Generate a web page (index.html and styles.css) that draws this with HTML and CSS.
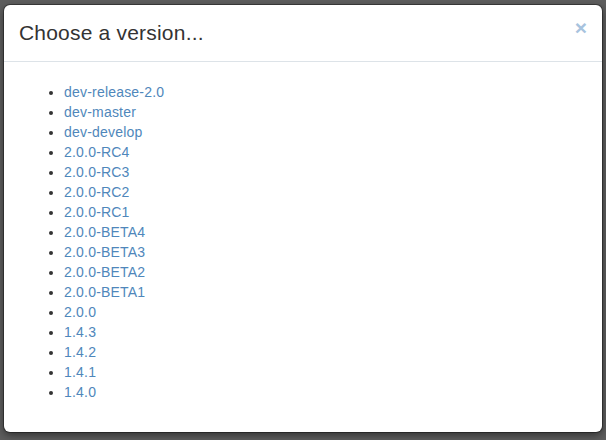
FILE: index.html
```html
<!DOCTYPE html>
<html>
<head>
<meta charset="utf-8">
<link rel="stylesheet" href="styles.css">
</head>
<body>
<div class="modal">
  <div class="modal-header">
    <h4 class="modal-title">Choose a version...</h4>
    <button class="close" type="button">×</button>
  </div>
  <div class="modal-body">
    <ul class="versions">
      <li><a href="#">dev-release-2.0</a></li>
      <li><a href="#">dev-master</a></li>
      <li><a href="#">dev-develop</a></li>
      <li><a href="#">2.0.0-RC4</a></li>
      <li><a href="#">2.0.0-RC3</a></li>
      <li><a href="#">2.0.0-RC2</a></li>
      <li><a href="#">2.0.0-RC1</a></li>
      <li><a href="#">2.0.0-BETA4</a></li>
      <li><a href="#">2.0.0-BETA3</a></li>
      <li><a href="#">2.0.0-BETA2</a></li>
      <li><a href="#">2.0.0-BETA1</a></li>
      <li><a href="#">2.0.0</a></li>
      <li><a href="#">1.4.3</a></li>
      <li><a href="#">1.4.2</a></li>
      <li><a href="#">1.4.1</a></li>
      <li><a href="#">1.4.0</a></li>
    </ul>
  </div>
</div>
</body>
</html>
```
FILE: styles.css
```css
html, body {
  margin: 0;
  padding: 0;
  height: 100%;
}
body {
  background: #5e5e5e;
  font-family: "Liberation Sans", Arial, sans-serif;
  font-size: 14px;
  line-height: 20px;
  color: #333;
  padding: 5px 4px 0 4px;
  box-sizing: border-box;
}
.modal {
  background: #fff;
  border-radius: 6px;
  box-shadow: 0 0 0 1px rgba(0,0,0,0.35), 0 3px 9px rgba(0,0,0,0.5);
  width: 598px;
}
.modal-header {
  display: flex;
  justify-content: space-between;
  align-items: flex-start;
  padding: 15px;
  border-bottom: 1px solid #dde3e8;
}
.modal-title {
  margin: 0;
  font-size: 21px;
  font-weight: normal;
  line-height: 26px;
  letter-spacing: 0.2px;
  color: #333;
}
.close {
  border: 0;
  background: none;
  padding: 0;
  margin-top: -3px;
  font-family: "Liberation Sans", Arial, sans-serif;
  font-size: 21px;
  font-weight: bold;
  line-height: 21px;
  color: #a7c3de;
  cursor: pointer;
}
.modal-body {
  padding: 20px;
}
.versions {
  margin: 0 0 10px;
  padding-left: 40px;
}
.versions a {
  color: #4f87bb;
  text-decoration: none;
  letter-spacing: 0.2px;
}
```
